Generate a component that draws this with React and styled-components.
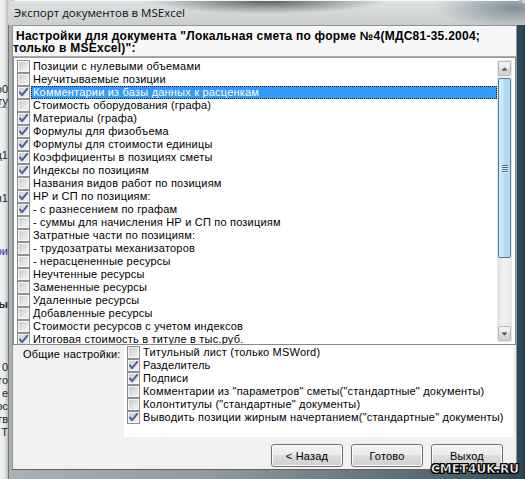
import React from 'react';
import styled, { createGlobalStyle } from 'styled-components';

const Global = createGlobalStyle`
  *, *::before, *::after { box-sizing: border-box; }
  html, body { margin: 0; padding: 0; }
  body {
    width: 525px; height: 479px; overflow: hidden;
    background: #d8d8d8;
    font-family: "Liberation Sans", Arial, sans-serif;
  }
`;

const Screen = styled.div`
  width: 525px; height: 479px;
  display: flex;
  overflow: hidden;
  position: relative;
`;

const Behind = styled.div`
  width: 8px; flex: none;
  background: linear-gradient(to right, #f2f2f2 0, #e6e6e6 5px, #b9b9b9 8px);
  overflow: hidden;
  display: flex; flex-direction: column;
  padding-top: 22px;
`;

const BehindRow = styled.div`
  height: ${p => p.$h || 13}px;
  flex: none;
  display: flex; justify-content: flex-end; align-items: center;
  white-space: nowrap;
  font-size: 11px;
  color: ${p => p.$c || '#222'};
  font-weight: ${p => (p.$b ? 700 : 400)};
  border-bottom: ${p => (p.$line ? '1px solid #9a9a9a' : 'none')};
`;

const Window = styled.div`
  flex: 1;
  display: flex; flex-direction: column;
  border-radius: 7px 7px 0 0;
  background: linear-gradient(90deg, #aab2b4 0%, #8e9a9f 40%, #4d6570 85%, #2c4652 100%);
  padding: 0 8px 9px 5px;
  box-shadow: inset 1px 0 0 #6d7477, inset -1px 0 0 #1f333c;
`;

const TitleBar = styled.div`
  height: 25px; flex: none;
  margin: 0 -8px 0 -5px;
  padding-left: 6px;
  display: flex; align-items: center;
  border-radius: 7px 7px 0 0;
  background:
    radial-gradient(ellipse 120px 14px at 50% 0%, rgba(40,40,40,0.75), rgba(40,40,40,0) 100%),
    radial-gradient(ellipse 80px 20px at 98% 30%, rgba(70,90,100,0.6), rgba(70,90,100,0) 100%),
    linear-gradient(to bottom, #dfe2e3, #c9cdce);
  box-shadow: inset 0 1px 0 #f4f6f6;
  font-family: "Open Sans", "Noto Sans", sans-serif;
  font-size: 11.5px;
  color: #111;
`;

const Client = styled.div`
  flex: 1;
  display: flex; flex-direction: column;
  background: #f1f1f1;
  border: 1px solid #8d9599;
  border-bottom-color: #6c5c58;
  margin-left: -1px;
`;

const Header = styled.div`
  height: 31px; flex: none;
  background: #f7f7f7;
  border-bottom: 1px solid #a9a9a9;
  padding-top: 4px;
  font-weight: 700;
  font-size: 12px;
  line-height: 12px;
  letter-spacing: 0.25px;
  color: #000;
`;

const HeaderLine = styled.div`
  padding-left: ${p => p.$indent || 0}px;
  white-space: nowrap;
`;

const ListBox = styled.div`
  height: 288px; flex: none;
  border: 1px solid #828790;
  border-top-color: #9a9a9a;
  background: #fff;
  padding: 2px 3px 0 2px;
  display: flex;
  overflow: hidden;
`;

const Items = styled.div`
  flex: 1;
  display: flex; flex-direction: column;
  overflow: hidden;
`;

const Row = styled.div`
  height: 13px; flex: none;
  display: flex; align-items: center;
  padding-left: ${p => p.$pad || 1}px;
`;

const Label = styled.div`
  flex: ${p => (p.$fill ? 1 : 'none')};
  height: 13px;
  margin-left: 1px;
  padding-left: 2px;
  line-height: 13px;
  font-size: 11px;
  letter-spacing: 0.2px;
  white-space: nowrap;
  color: ${p => (p.$sel ? '#fff' : '#000')};
  background: ${p => (p.$sel ? '#3399ff' : 'transparent')};
  outline: ${p => (p.$sel ? '1px dotted #1a1a1a' : 'none')};
  outline-offset: -1px;
`;

const ScrollBar = styled.div`
  width: 15px; flex: none;
  margin-bottom: 2px;
  display: flex; flex-direction: column;
  background: linear-gradient(90deg, #e3e3e3, #f1f1f1 40%, #eaeaea);
  border: 1px solid #e6e6e6;
`;

const Arrow = styled.div`
  height: 15px; flex: none;
  border: 1px solid #b9b9b9;
  border-radius: 2px;
  background: linear-gradient(to bottom, #f6f6f6, #e6e6e6 50%, #d8d8d8 51%, #d2d2d2);
  display: flex; align-items: center; justify-content: center;
`;

const Thumb = styled.div`
  height: 180px; flex: none;
  margin-top: 2px;
  border: 1px solid #4f7a96;
  border-radius: 2px;
  background: linear-gradient(90deg, #d6eefb, #bfe3f6 45%, #a9d8f1 55%, #b3ddf3);
  display: flex; align-items: center; justify-content: center;
`;

const Track = styled.div`
  flex: 1;
`;

const Grip = styled.div`
  width: 6px;
  display: flex; flex-direction: column; gap: 1px;
  & > span { height: 1px; background: #3f6b8a; box-shadow: 0 1px 0 #e8f6fd; }
`;

const Bottom = styled.div`
  height: 92px; flex: none;
  display: flex;
`;

const SectionLabel = styled.div`
  width: 111px; flex: none;
  padding: 3px 0 0 10px;
  font-size: 11px;
  line-height: 13px;
  letter-spacing: 0.2px;
  color: #000;
  white-space: nowrap;
`;

const Options = styled.div`
  flex: 1;
  margin-right: 3px;
  background: #fff;
  padding-top: 1px;
  display: flex; flex-direction: column;
`;

const Buttons = styled.div`
  flex: 1;
  display: flex; justify-content: flex-end; align-items: flex-start;
  gap: 8px;
  padding: 7px 13px 0 0;
`;

const Button = styled.div`
  width: 72px; height: 23px;
  border: 1px solid #707070;
  border-radius: 3px;
  background: linear-gradient(to bottom, #f3f3f3 0%, #ebebeb 45%, #dddddd 50%, #cfcfcf 100%);
  box-shadow: inset 0 0 0 1px #fcfcfc;
  display: flex; align-items: center; justify-content: center;
  font-size: 11px;
  letter-spacing: 0.2px;
  color: #000;
`;

const Watermark = styled.div`
  position: absolute;
  right: 6px; bottom: 3px;
  font-family: "DejaVu Sans", sans-serif;
  font-weight: 700;
  font-size: 12px;
  line-height: 14px;
  color: #fff;
  -webkit-text-stroke: 0.5px #000;
  text-shadow: 1px 1px 0 #000, -1px -1px 0 #000, 1px -1px 0 #000, -1px 1px 0 #000, 0 1px 0 #000, 1px 0 0 #000, 0 -1px 0 #000, -1px 0 0 #000;
`;

function CheckBox({ checked }) {
  return (
    <svg width="13" height="13" viewBox="0 0 13 13" style={{ flex: 'none', display: 'block' }}>
      <defs>
        <linearGradient id="cbg" x1="0" y1="0" x2="1" y2="1">
          <stop offset="0" stopColor="#c9ccd1" />
          <stop offset="1" stopColor="#f4f4f4" />
        </linearGradient>
      </defs>
      <rect x="0.5" y="0.5" width="12" height="12" fill="#f6f6f6" stroke="#8e8f8f" />
      <rect x="2" y="2" width="9" height="9" fill="url(#cbg)" />
      {checked && (
        <path d="M2.8 6.4 L5.1 9.2 L10.2 2.8" fill="none" stroke="#4a5e9a" strokeWidth="1.9" strokeLinecap="round" strokeLinejoin="round" />
      )}
    </svg>
  );
}

function ArrowGlyph({ up }) {
  return (
    <svg width="7" height="4" viewBox="0 0 7 4">
      <path d={up ? 'M0.5 3.5 L3.5 0.5 L6.5 3.5 Z' : 'M0.5 0.5 L3.5 3.5 L6.5 0.5 Z'} fill="#4d4d4d" />
    </svg>
  );
}

const items = [
  ['Позиции с нулевыми объемами', false],
  ['Неучитываемые позиции', false],
  ['Комментарии из базы данных к расценкам', true, true],
  ['Стоимость оборудования (графа)', false],
  ['Материалы (графа)', true],
  ['Формулы для физобъема', true],
  ['Формулы для стоимости единицы', true],
  ['Коэффициенты в позициях сметы', true],
  ['Индексы по позициям', true],
  ['Названия видов работ по позициям', false],
  ['НР и СП по позициям:', true],
  ['- с разнесением по графам', true],
  ['- суммы для начисления НР и СП по позициям', false],
  ['Затратные части по позициям:', false],
  ['- трудозатраты механизаторов', false],
  ['- нерасцененные ресурсы', false],
  ['Неучтенные ресурсы', false],
  ['Замененные ресурсы', false],
  ['Удаленные ресурсы', false],
  ['Добавленные ресурсы', false],
  ['Стоимости ресурсов с учетом индексов', false],
  ['Итоговая стоимость в титуле в тыс.руб.', true],
];

const options = [
  ['Титульный лист (только MSWord)', false],
  ['Разделитель', true],
  ['Подписи', true],
  ['Комментарии из "параметров" сметы("стандартные" документы)', false],
  ['Колонтитулы ("стандартные" документы)', false],
  ['Выводить позиции жирным начертанием("стандартные" документы)', true],
];

const behind = [
  { t: '', h: 60 },
  { t: 'ю0', h: 13 },
  { t: 'ту', h: 13, line: true },
  { t: '', h: 40 },
  { t: 'д1', h: 13 },
  { t: '', h: 30 },
  { t: 'н1', h: 13 },
  { t: '', h: 40 },
  { t: 'ои', h: 13, c: '#2a2ab0' },
  { t: '', h: 40 },
  { t: 'ы', h: 13, b: true },
  { t: '', h: 50 },
  { t: '0', h: 13 },
  { t: 'ro', h: 13 },
  { t: 'е', h: 13 },
  { t: 'эс', h: 13 },
  { t: 'тв', h: 13 },
  { t: 'T', h: 13 },
];

export default function App() {
  return (
    <>
      <Global />
      <Screen>
        <Behind>
          {behind.map((r, i) => (
            <BehindRow key={i} $h={r.h} $c={r.c} $b={r.b} $line={r.line}>{r.t}</BehindRow>
          ))}
        </Behind>
        <Window>
          <TitleBar>Экспорт документов в MSExcel</TitleBar>
          <Client>
            <Header>
              <HeaderLine $indent={3}>Настройки для документа "Локальная смета по форме №4(МДС81-35.2004;</HeaderLine>
              <HeaderLine>только в MSExcel)":</HeaderLine>
            </Header>
            <ListBox>
              <Items>
                {items.map(([t, c, sel], i) => (
                  <Row key={i}>
                    <CheckBox checked={c} />
                    <Label $sel={sel} $fill={sel}>{t}</Label>
                  </Row>
                ))}
              </Items>
              <ScrollBar>
                <Arrow><ArrowGlyph up /></Arrow>
                <Thumb>
                  <Grip><span /><span /><span /><span /></Grip>
                </Thumb>
                <Track />
                <Arrow><ArrowGlyph /></Arrow>
              </ScrollBar>
            </ListBox>
            <Bottom>
              <SectionLabel>Общие настройки:</SectionLabel>
              <Options>
                {options.map(([t, c], i) => (
                  <Row key={i} $pad={3}>
                    <CheckBox checked={c} />
                    <Label>{t}</Label>
                  </Row>
                ))}
              </Options>
            </Bottom>
            <Buttons>
              <Button>&lt; Назад</Button>
              <Button>Готово</Button>
              <Button>Выход</Button>
            </Buttons>
          </Client>
        </Window>
        <Watermark>CMET4UK.RU</Watermark>
      </Screen>
    </>
  );
}
